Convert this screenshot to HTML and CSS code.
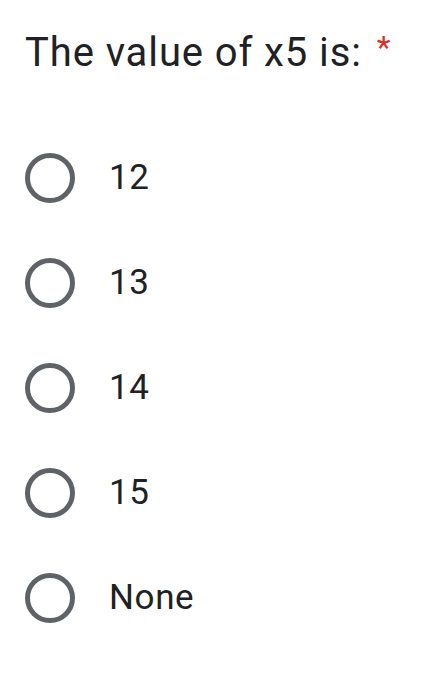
FILE: index.html
```html
<!DOCTYPE html>
<html>
<head>
<meta charset="utf-8">
<link rel="stylesheet" href="styles.css">
</head>
<body>
<div class="question">
  <div class="title">The value of x5 is: <span class="req">*</span></div>
  <div class="options">
    <div class="option"><span class="radio"></span><span class="label">12</span></div>
    <div class="option"><span class="radio"></span><span class="label">13</span></div>
    <div class="option"><span class="radio"></span><span class="label">14</span></div>
    <div class="option"><span class="radio"></span><span class="label">15</span></div>
    <div class="option"><span class="radio"></span><span class="label">None</span></div>
  </div>
</div>
</body>
</html>
```
FILE: styles.css
```css
html, body {
  margin: 0;
  padding: 0;
  background: #ffffff;
}
body {
  font-family: Roboto, "Noto Sans", sans-serif;
  color: #202124;
}
.question {
  padding: 21px 0 0 25px;
}
.title {
  font-size: 40px;
  line-height: 52px;
  letter-spacing: 0.9px;
}
.req {
  color: #d93025;
  font-size: 32px;
  vertical-align: 8px;
  margin-left: 4px;
}
.options {
  display: flex;
  flex-direction: column;
  margin-top: 46px;
}
.option {
  display: flex;
  align-items: center;
  height: 105px;
}
.radio {
  box-sizing: border-box;
  width: 50px;
  height: 50px;
  border: 5px solid #5f6368;
  border-radius: 50%;
  flex: none;
}
.label {
  margin-left: 34px;
  font-size: 35px;
  letter-spacing: 0.6px;
}
```
